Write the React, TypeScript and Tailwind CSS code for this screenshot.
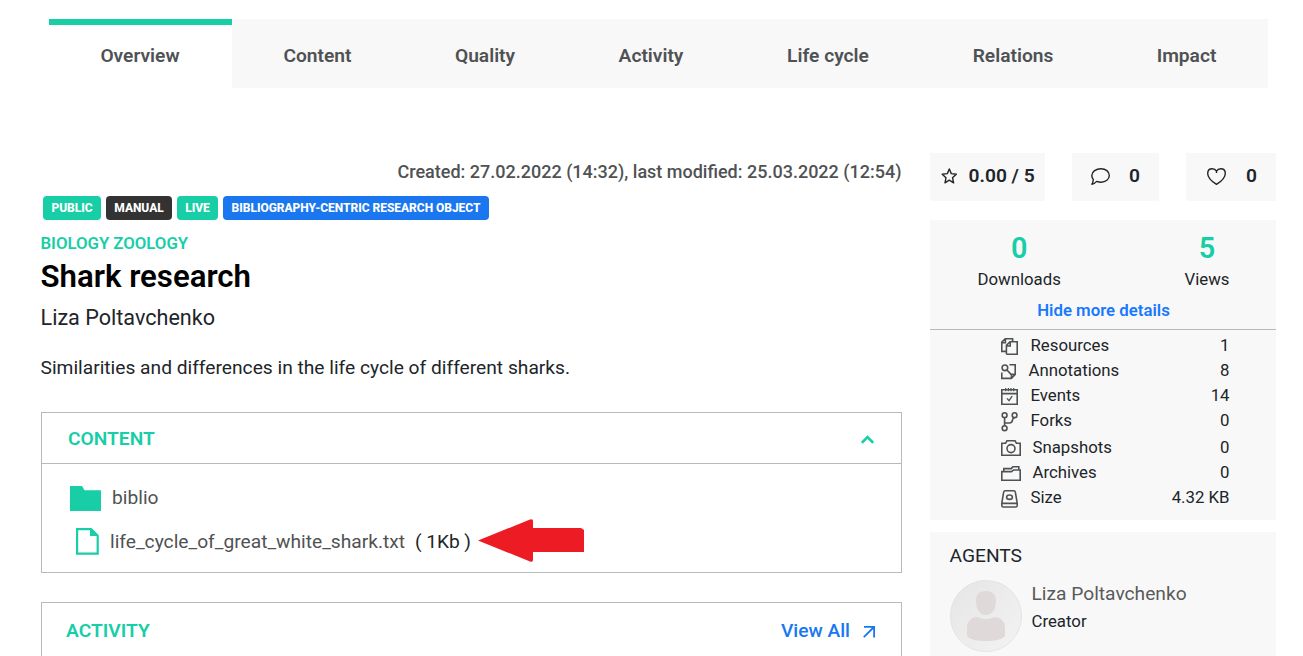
import type { ReactNode } from "react";

const tabs = [
  { label: "Content", width: "w-[171px]" },
  { label: "Quality", width: "w-[164px]" },
  { label: "Activity", width: "w-[168px]" },
  { label: "Life cycle", width: "w-[186px]" },
  { label: "Relations", width: "w-[184px]" },
  { label: "Impact", width: "w-[163px]" },
];

const badges = [
  { label: "PUBLIC", style: "w-[58px] bg-[#17cea6]" },
  { label: "MANUAL", style: "w-[66px] bg-[#333333]" },
  { label: "LIVE", style: "w-[41px] bg-[#17cea6]" },
  { label: "BIBLIOGRAPHY-CENTRIC RESEARCH OBJECT", style: "w-[266px] bg-[#1a77f0]" },
];

function Icon({ w, h, className = "", children }: { w: number; h: number; className?: string; children: ReactNode }) {
  return (
    <svg
      width={w}
      height={h}
      viewBox={`0 0 ${w} ${h}`}
      fill="none"
      stroke="currentColor"
      strokeWidth="1.6"
      className={`shrink-0 ${className}`}
    >
      {children}
    </svg>
  );
}

const details = [
  {
    label: "Resources",
    value: "1",
    row: "h-[25px]",
    icon: (
      <Icon w={18} h={17} className="mt-[5px]">
        <path d="M5 13.400H.8V4.200L4.200.8H11.600V3.600M.8 4.800H4.400V.8M5.400 16.200V7.400L9 3.800H16.200V16.200H5.400M5.400 8H9.200V3.800" />
      </Icon>
    ),
  },
  {
    label: "Annotations",
    value: "8",
    row: "h-[25px]",
    icon: (
      <Icon w={16} h={16} className="mt-[6px]">
        <circle cx="3.9" cy="3.8" r="2.8" />
        <path d="M6 6 10 10.400M8.400.8H14.200V10.400L10.400 14.400H.8V8.600M10.400 14.400V10.400H14.200" />
      </Icon>
    ),
  },
  {
    label: "Events",
    value: "14",
    row: "h-[25px]",
    icon: (
      <Icon w={18} h={17} className="mt-[5px]">
        <path d="M.8 1.800H16.200V16.200H.8ZM.8 5.600H16.200" />
        <path d="M4.700 0V3.200M7.400 0V3.200M10 0V3.200M12.700 0V3.200" strokeWidth="1.200" />
        <path d="M6 10.400 8 12.600 11.200 8.200" strokeWidth="1.400" />
      </Icon>
    ),
  },
  {
    label: "Forks",
    value: "0",
    row: "h-[27px]",
    icon: (
      <Icon w={18} h={20} className="mt-1">
        <circle cx="3.600" cy="3.2" r="2.4" />
        <circle cx="13.600" cy="3.2" r="2.4" />
        <circle cx="3.600" cy="16.2" r="2.4" />
        <path d="M3.600 5.600V13.800M3.600 11H8.400C10.600 11 11.200 9.600 11.400 8.400S12.200 6.400 13.200 5.800" />
      </Icon>
    ),
  },
  {
    label: "Snapshots",
    value: "0",
    row: "h-[25px]",
    icon: (
      <Icon w={20} h={16} className="mt-[5px]">
        <path d="M.8 3.2H4.600L6 .8H14L15.400 3.2H19.2V15.2H.8Z" />
        <circle cx="10" cy="8.600" r="4" />
      </Icon>
    ),
  },
  {
    label: "Archives",
    value: "0",
    row: "h-[25px]",
    icon: (
      <Icon w={20} h={15} className="mt-[6px]">
        <path d="M.8 14.2V5.600H10.600L12.600 4H19.2V14.2ZM2.800 5.400V2.600H10.400L11.800.8H17.800V3.600" />
      </Icon>
    ),
  },
  {
    label: "Size",
    value: "4.32 KB",
    row: "h-[25px]",
    icon: (
      <Icon w={18} h={18} className="mt-[5px]">
        <path d="M.8 13.2 2.600 2.400Q2.800.8 4.400.8H12.600Q14.200.8 14.400 2.400L16.200 13.2V15.600Q16.200 17 14.800 17H2.200Q.8 17 .8 15.600ZM.8 13.400H16.2" />
        <ellipse cx="8.500" cy="7.2" rx="2.900" ry="2.2" />
      </Icon>
    ),
  },
];

export default function App() {
  return (
    <div className="h-[656px] w-[1303px] overflow-hidden bg-white font-[Roboto,sans-serif] text-[#212529]">
      <nav className="ml-[49px] flex h-[88px] pt-[19px] text-[19.2px] font-semibold text-[#4f5254]">
        <div className="flex w-[183px] items-center justify-center border-t-[6px] border-[#17cea6] pr-px">
          <span>Overview</span>
        </div>
        {tabs.map((t) => (
          <div key={t.label} className={`flex items-center justify-center bg-[#f8f8f8] pt-[6px] ${t.width}`}>
            <span>{t.label}</span>
          </div>
        ))}
      </nav>

      <div className="flex pl-[41px] pt-[65px]">
        <main className="w-[861px] shrink-0">
          <p className="flex h-[43px] items-center justify-end pb-[7px] pr-[0.5px] text-[18px] font-medium text-[#4f5254]">
            Created: 27.02.2022 (14:32), last modified: 25.03.2022 (12:54)
          </p>
          <div className="flex gap-[5px] pl-[2px]">
            {badges.map((b) => (
              <span
                key={b.label}
                className={`flex h-6 items-center justify-center whitespace-nowrap rounded text-[12px] font-extrabold tracking-[-0.04px] text-white ${b.style}`}
              >
                {b.label}
              </span>
            ))}
          </div>
          <p className="-ml-[0.5px] mt-[11px] text-[16.8px] font-semibold leading-6 tracking-[-0.03px] text-[#17cea6]">
            BIOLOGY ZOOLOGY
          </p>
          <h1 className="-ml-[0.5px] mt-px text-[31.2px] font-semibold leading-[42px] text-black">Shark research</h1>
          <p className="-ml-[0.5px] mt-1 text-[21.6px] leading-8">Liza Poltavchenko</p>
          <p className="-ml-[0.5px] mt-5 text-[19.2px] leading-[27px]">
            Similarities and differences in the life cycle of different sharks.
          </p>

          <section className="mt-[31px] h-[161px] border border-[#b9b9b9]">
            <header className="flex h-[51px] items-center justify-between border-b border-[#b9b9b9] pl-[26px] pr-[27px]">
              <h2 className="pt-[2px] text-[19.2px] font-semibold leading-7 text-[#17cea6]">CONTENT</h2>
              <svg width="13" height="9" viewBox="0 0 13 9" fill="none" stroke="#17cea6" strokeWidth="2.6" className="mt-[2px]">
                <path d="M.9 7.800 6.500 2 12.100 7.800" />
              </svg>
            </header>
            <div className="flex h-[65px] items-center pl-7 text-[19.2px] text-[#4f5254]">
              <svg width="31" height="25" viewBox="0 0 31 25" fill="#17cea6" className="mt-[3px]">
                <path d="M0 0H12L14.500 4.2H31V25H0Z" />
              </svg>
              <span className="ml-[11px] pt-[3px] leading-7">biblio</span>
            </div>
            <div className="flex h-6 items-center pl-[34px] text-[19.2px] text-[#4f5254]">
              <svg width="23" height="27" viewBox="0 0 23 27" fill="none" stroke="#17cea6" strokeWidth="2.2">
                <path d="M1.100 1.100H15L21.700 7.600V25.700H1.100Z" />
                <path d="M14 1H16L22 7V8H14Z" fill="#17cea6" stroke="none" />
              </svg>
              <span className="ml-[11px] pt-[2px]">life_cycle_of_great_white_shark.txt</span>
              <span className="ml-[10px] pt-[2px] tracking-[-0.08px] text-[#212529]">( 1Kb )</span>
              <svg width="106" height="43" viewBox="0 0 106 43" fill="#ed1c24" className="-mt-px ml-[7px]">
                <path d="M0 21.500 52 .5Q55-.5 55 2V9H103L106 11V33H55V41Q55 43.500 52 42.500Z" />
              </svg>
            </div>
          </section>

          <section className="mt-[29px] flex h-[70px] justify-between border border-[#b9b9b9] pl-6 pr-[26px] pt-[14px] text-[19.2px] leading-[27px]">
            <h2 className="font-semibold text-[#17cea6]">ACTIVITY</h2>
            <a className="flex font-medium text-[#1877f2]">
              <span>View All</span>
              <svg width="12" height="12" viewBox="0 0 12 12" fill="none" stroke="currentColor" strokeWidth="1.8" className="ml-[13px] mt-[9px]">
                <path d="M1 .9H11.100V11.500M11 1 .8 11.200" />
              </svg>
            </a>
          </section>
        </main>

        <aside className="ml-7 w-[346px] shrink-0">
          <div className="flex gap-[27px] text-[19.2px] font-semibold">
            <div className="flex h-12 w-[115px] items-center bg-[#f8f8f8] pb-1 pl-[11px]">
              <svg width="16" height="16" viewBox="0 0 16 16" fill="none" stroke="currentColor" strokeWidth="1.400" strokeLinejoin="round" className="mt-[2px]">
                <path d="M8.300 1 10.300 5.600 15.300 6.200 11.500 9.700 12.600 14.800 8.300 12.200 4 14.800 5 9.700 1.200 6.200 6.300 5.600Z" />
              </svg>
              <span className="ml-[11.5px] pt-[2px] leading-7">0.00 / 5</span>
            </div>
            <div className="flex h-12 w-[87px] items-center bg-[#f8f8f8] pb-1 pl-[19px]">
              <svg width="19" height="17" viewBox="0 0 19 17" fill="none" stroke="currentColor" strokeWidth="1.400" strokeLinejoin="round" className="mt-[3px]">
                <path d="M10 .7C14.700.7 18.300 3.600 18.300 7.500S14.700 14.200 10 14.200C8.400 14.200 7 13.900 5.700 13.400 4.300 15 2.600 15.900.9 16.200 1.600 14.800 2.300 13 2.300 11.400 1.300 10.300.8 8.900.8 7.500.8 3.600 5.100.7 10 .7Z" />
              </svg>
              <span className="ml-[19px] pt-[2px] leading-7">0</span>
            </div>
            <div className="flex h-12 w-[90px] items-center bg-[#f8f8f8] pb-1 pl-[21px]">
              <svg width="19" height="17" viewBox="0 0 19 17" fill="none" stroke="currentColor" strokeWidth="1.400" strokeLinejoin="round" className="mt-[3px]">
                <path d="M9.500 3.200C10.600 1.200 12.300.7 13.800.7 16.500.7 18.300 2.600 18.300 5.400 18.300 10 14 13.500 9.500 16.300 5 13.500.7 10 .7 5.400.7 2.600 2.500.7 5.200.7 6.700.7 8.400 1.200 9.500 3.200ZM9.500 3.200V5" />
              </svg>
              <span className="ml-5 pt-[2px] leading-7">0</span>
            </div>
          </div>

          <section className="mt-[19px] h-[300px] bg-[#f8f8f8]">
            <div className="h-[110px] border-b border-[#b9b9b9] pt-[10px]">
              <div className="flex justify-between pl-[47.5px] pr-[46.5px] text-center text-[16.8px]">
                <div>
                  <p className="text-[28.8px] font-semibold leading-9 text-[#17cea6]">0</p>
                  <p className="leading-[27px]">Downloads</p>
                </div>
                <div>
                  <p className="text-[28.8px] font-semibold leading-9 text-[#17cea6]">5</p>
                  <p className="leading-[27px]">Views</p>
                </div>
              </div>
              <p className="mt-[3px] pl-px text-center text-[16.8px] font-semibold leading-7 text-[#1878ff]">
                Hide more details
              </p>
            </div>
            <ul className="pl-[71px] pr-[46.5px] pt-[3px] text-[16.8px] leading-[25px]">
              {details.map((d) => (
                <li key={d.label} className={`flex items-start ${d.row}`}>
                  <span className="text-[#4f5254]">{d.icon}</span>
                  <span className="ml-[11.500px]">{d.label}</span>
                  <span className="ml-auto">{d.value}</span>
                </li>
              ))}
            </ul>
          </section>

          <section className="mt-3 h-[130px] bg-[#f8f8f8] pl-[19.5px] pt-[10px]">
            <h2 className="text-[19.2px] leading-[27px]">AGENTS</h2>
            <div className="mt-[11px] flex pl-[0.5px]">
              <svg width="72" height="72" viewBox="0 0 72 72">
                <defs>
                  <linearGradient id="avatar" x1="0" y1="0" x2="1" y2="1">
                    <stop offset="0" stopColor="#e5e5e5" />
                    <stop offset="1" stopColor="#f3f3f3" />
                  </linearGradient>
                </defs>
                <circle cx="36" cy="36" r="35.600" fill="url(#avatar)" stroke="#dedede" strokeWidth="0.700" />
                <path
                  d="M36 11C43 11 46 15 46 21 46 29 42 35 36 35S26 29 26 21C26 15 29 11 36 11ZM28 37C32 39.500 40 39.500 44 37 51 37 55 42 55 47V56C52 60 44 61 36 61S20 60 17 56V47C17 42 21 37 28 37Z"
                  fill="#dfd9d9"
                />
              </svg>
              <div className="ml-[9.5px]">
                <p className="text-[19.2px] leading-[28px] text-[#5a5a5a]">Liza Poltavchenko</p>
                <p className="text-[16.8px] leading-[26px]">Creator</p>
              </div>
            </div>
          </section>
        </aside>
      </div>
    </div>
  );
}
